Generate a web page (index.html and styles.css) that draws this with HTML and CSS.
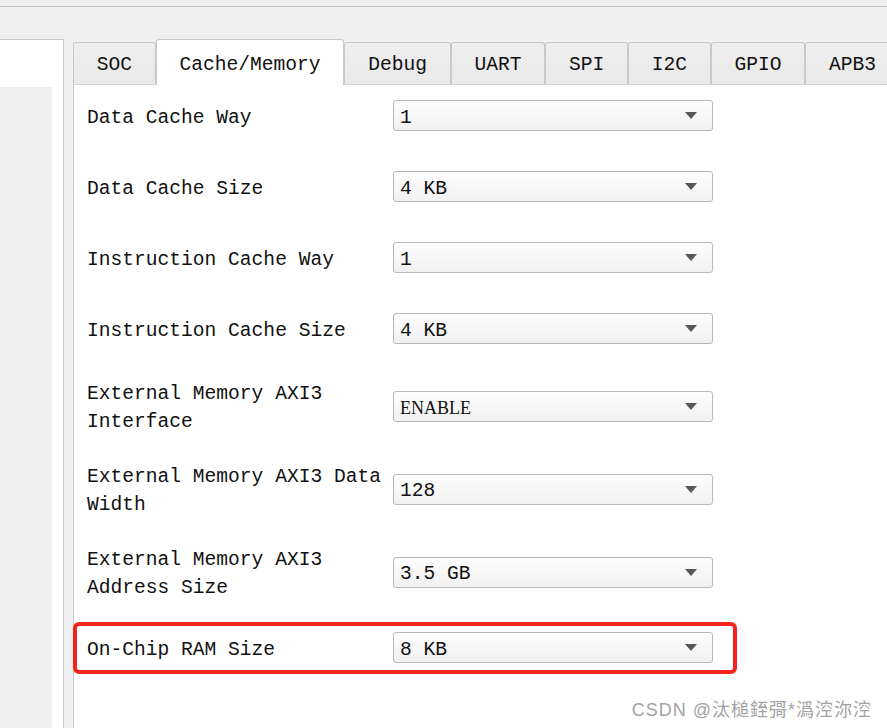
FILE: index.html
```html
<!DOCTYPE html>
<html>
<head>
<meta charset="utf-8">
<link rel="stylesheet" href="styles.css">
</head>
<body>
<div class="topbar"></div>
<div class="main">
  <aside class="side"><div class="side-inner"></div></aside>
  <section class="tabs">
    <div class="tabbar">
      <div class="tab">SOC</div>
      <div class="tab active">Cache/Memory</div>
      <div class="tab">Debug</div>
      <div class="tab">UART</div>
      <div class="tab">SPI</div>
      <div class="tab">I2C</div>
      <div class="tab">GPIO</div>
      <div class="tab">APB3</div>
    </div>
    <div class="pane">
      <div class="row">
        <div class="label">Data Cache Way</div>
        <div class="combo"><span class="val">1</span><span class="arrow"></span></div>
      </div>
      <div class="row">
        <div class="label">Data Cache Size</div>
        <div class="combo"><span class="val">4 KB</span><span class="arrow"></span></div>
      </div>
      <div class="row">
        <div class="label">Instruction Cache Way</div>
        <div class="combo"><span class="val">1</span><span class="arrow"></span></div>
      </div>
      <div class="row">
        <div class="label">Instruction Cache Size</div>
        <div class="combo"><span class="val">4 KB</span><span class="arrow"></span></div>
      </div>
      <div class="row row-a">
        <div class="label">External Memory AXI3<br>Interface</div>
        <div class="combo"><span class="val serif">ENABLE</span><span class="arrow"></span></div>
      </div>
      <div class="row row-b">
        <div class="label">External Memory AXI3 Data<br>Width</div>
        <div class="combo"><span class="val">128</span><span class="arrow"></span></div>
      </div>
      <div class="row row-b">
        <div class="label">External Memory AXI3<br>Address Size</div>
        <div class="combo"><span class="val">3.5 GB</span><span class="arrow"></span></div>
      </div>
      <div class="row row-c">
        <div class="label">On-Chip RAM Size</div>
        <div class="combo"><span class="val">8 KB</span><span class="arrow"></span></div>
      </div>
    </div>
  </section>
</div>
<div class="highlight"></div>
<div class="watermark">CSDN @汰槌銍彁*潙涳沵涳</div>
</body>
</html>
```

FILE: styles.css
```css
html, body {
  margin: 0;
  padding: 0;
}
body {
  width: 887px;
  height: 728px;
  overflow: hidden;
  position: relative;
  background: #f0f0f0;
  font-family: "Liberation Mono", monospace;
  color: #111;
}
.topbar {
  height: 6px;
  border-bottom: 1px solid #c6c6c6;
  background: #f0f0f0;
}
.main {
  margin-top: 32px;
  height: 689px;
  display: flex;
  gap: 9px;
}
.side {
  width: 63px;
  flex-shrink: 0;
  background: #ffffff;
  border-top: 1px solid #c8c8c8;
  border-right: 1px solid #c8c8c8;
  display: flex;
  flex-direction: column;
}
.side-inner {
  margin-top: 47px;
  width: 52px;
  flex: 1;
  background: #efefef;
}
.tabs {
  flex: 1;
  min-width: 0;
  display: flex;
  flex-direction: column;
  overflow: hidden;
}
.tabbar {
  height: 45px;
  display: flex;
  align-items: flex-end;
  white-space: nowrap;
  position: relative;
  z-index: 1;
}
.tab {
  flex-shrink: 0;
  box-sizing: border-box;
  height: 42px;
  padding: 4px 22.75px 0;
  border: 1px solid #c8c8c8;
  border-bottom: none;
  border-radius: 3px 3px 0 0;
  background: linear-gradient(#eeeeee, #e9e9e9);
  font-size: 19.6px;
  line-height: 37px;
  color: #111;
}
.tab.active {
  height: 46px;
  margin-bottom: -1px;
  line-height: 43px;
  background: #ffffff;
  padding-top: 4px;
  padding-bottom: 0;
  overflow: hidden;
}
.pane {
  flex: 1;
  background: #ffffff;
  border-top: 1px solid #d4d4d4;
  border-left: 1px solid #c8c8c8;
  padding: 15px 0 0 13px;
  display: flex;
  flex-direction: column;
}
.row {
  display: flex;
  align-items: center;
  min-height: 31px;
}
.row + .row {
  margin-top: 40px;
}
.row + .row.row-a {
  margin-top: 34px;
}
.row + .row.row-b {
  margin-top: 27px;
}
.row + .row.row-c {
  margin-top: 32px;
}
.label {
  width: 306px;
  flex-shrink: 0;
  font-size: 19.6px;
  line-height: 28px;
  padding-top: 2px;
  margin-bottom: -2px;
  color: #111;
}
.combo {
  box-sizing: border-box;
  width: 320px;
  height: 31px;
  border: 1px solid #b8b8b8;
  border-radius: 3px;
  background: linear-gradient(#fdfdfd, #f1f1f1);
  display: flex;
  align-items: center;
  justify-content: space-between;
  padding: 0 15px 0 6px;
}
.val {
  font-size: 19.6px;
  line-height: 28px;
  padding-top: 4px;
  color: #111;
}
.val.serif {
  font-family: "Liberation Serif", serif;
  font-size: 18px;
}
.arrow {
  width: 0;
  height: 0;
  border-left: 6.5px solid transparent;
  border-right: 6.5px solid transparent;
  border-top: 7px solid #575757;
}
.highlight {
  position: absolute;
  left: 73px;
  top: 622px;
  width: 664px;
  height: 52px;
  box-sizing: border-box;
  border: 4px solid #f5231b;
  border-radius: 6px;
}
.watermark {
  position: absolute;
  right: 15px;
  top: 698px;
  font-family: "Liberation Sans", "Noto Sans CJK SC", sans-serif;
  font-size: 18px;
  line-height: 24px;
  letter-spacing: 1px;
  color: #a2a2a2;
  white-space: nowrap;
}
```
